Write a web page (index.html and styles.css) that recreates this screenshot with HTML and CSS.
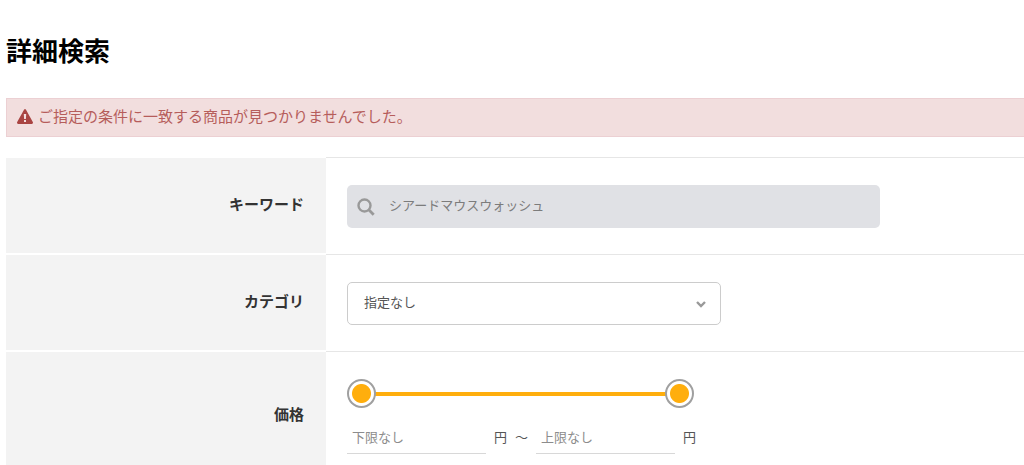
FILE: index.html
```html
<!DOCTYPE html>
<html lang="ja">
<head>
<meta charset="utf-8">
<meta name="viewport" content="width=device-width, initial-scale=1">
<title>詳細検索</title>
<link rel="stylesheet" href="styles.css">
</head>
<body>
<main class="page">
  <h1 class="title">詳細検索</h1>
  <p class="alert" role="alert">
    <svg class="alert-icon" viewBox="0 0 16 15" aria-hidden="true">
      <path fill="currentColor" fill-rule="evenodd" d="M7 .8a1.2 1.2 0 0 1 2 0l6.8 12.3a1.2 1.2 0 0 1-1 1.8H1.2a1.2 1.2 0 0 1-1-1.8zM6.8 5l.3 5h1.800l.3-5zM7 11v2h2v-2z"/>
    </svg>
    <span>ご指定の条件に一致する商品が見つかりませんでした。</span>
  </p>
  <form class="search">
    <div class="row">
      <label class="label" for="keyword">キーワード</label>
      <div class="field">
        <div class="keyword">
          <svg class="keyword-icon" viewBox="0 0 18 18" aria-hidden="true">
            <circle cx="7.5" cy="7.5" r="6" fill="none" stroke="currentColor" stroke-width="2.4"/>
            <path d="M12 12l4.7 4.7" stroke="currentColor" stroke-width="2.8"/>
          </svg>
          <input class="keyword-input" id="keyword" type="text" value="シアードマウスウォッシュ">
        </div>
      </div>
    </div>
    <div class="row">
      <label class="label" for="category">カテゴリ</label>
      <div class="field">
        <div class="select">
          <select class="select-box" id="category"><option>指定なし</option></select>
          <svg class="select-arrow" viewBox="0 0 10 8" aria-hidden="true">
            <path d="M1 2l4 4 4-4" fill="none" stroke="currentColor" stroke-width="2.4"/>
          </svg>
        </div>
      </div>
    </div>
    <div class="row">
      <label class="label" for="price-min">価格</label>
      <div class="field">
        <div class="slider">
          <input class="range" type="range" min="0" max="100" value="0" aria-label="価格の下限">
          <input class="range" type="range" min="0" max="100" value="100" aria-label="価格の上限">
        </div>
        <div class="prices">
          <input class="price" id="price-min" type="text" placeholder="下限なし">
          <span class="unit">円</span>
          <span class="unit">～</span>
          <input class="price" type="text" placeholder="上限なし" aria-label="上限">
          <span class="unit">円</span>
        </div>
      </div>
    </div>
  </form>
</main>
</body>
</html>
```
FILE: styles.css
```css
* {
  box-sizing: border-box;
}

body {
  margin: 0;
  background: #fff;
  color: #333;
  font: 13px/20px "Noto Sans CJK JP", sans-serif;
}

input,
select {
  font: inherit;
}

.page {
  padding: 30px 0 0 6px;
}

.title {
  margin: 0 0 28px;
  color: #000;
  font-size: 26px;
  line-height: 40px;
  font-weight: 700;
}

.alert {
  display: flex;
  align-items: center;
  gap: 6px;
  margin: 0 0 20px;
  padding: 5px 10px 8px;
  border: 1px solid #ecd0d3;
  border-right: 0;
  background: #f2dede;
  color: #b65d5b;
  font-size: 15px;
  line-height: 24px;
}

.alert-icon {
  width: 16px;
  height: 15px;
  color: #a94442;
}

.alert span {
  margin-left: -1px;
}

.row {
  display: grid;
  grid-template-columns: 320px 1fr;
}

.label {
  display: flex;
  align-items: center;
  justify-content: flex-end;
  margin: 1px 0;
  padding: 0 22px 4px 0;
  background: #f3f3f3;
  font-size: 15px;
  font-weight: 700;
}

.field {
  padding: 27px 21px 26px;
  border-top: 1px solid #e6e6e6;
}

.keyword {
  display: flex;
  align-items: center;
  gap: 14px;
  max-width: 533px;
  height: 43px;
  padding: 0 10px;
  border-radius: 5px;
  background: #e0e1e5;
}

.keyword-icon {
  flex: none;
  width: 18px;
  height: 18px;
  color: #999;
}

.keyword-input {
  flex: 1;
  min-width: 0;
  padding: 0 0 4px;
  border: 0;
  background: none;
  color: #7c7c7c;
}

.select {
  display: grid;
  align-items: center;
  max-width: 374px;
}

.select-box,
.select-arrow {
  grid-area: 1 / 1;
}

.select-box {
  width: 100%;
  height: 43px;
  padding: 0 32px 4px 16px;
  border: 1px solid #ccc;
  border-radius: 5px;
  appearance: none;
  background: #fff;
  color: #555;
}

.select-arrow {
  justify-self: end;
  width: 10px;
  height: 8px;
  margin-right: 15px;
  color: #999;
  pointer-events: none;
}

.slider {
  display: grid;
  align-items: center;
  max-width: 347px;
  height: 29px;
  background: linear-gradient(#ffae0d, #ffae0d) center / 320px 4px no-repeat;
}

.range {
  grid-area: 1 / 1;
  width: 100%;
  height: 29px;
  margin: 0;
  appearance: none;
  background: none;
  pointer-events: none;
}

.range::-webkit-slider-thumb {
  width: 29px;
  height: 29px;
  border: 2px solid #a0a0a0;
  border-radius: 50%;
  appearance: none;
  background: radial-gradient(circle, #ffae0d 9px, #fff 10px);
  pointer-events: auto;
}

.prices {
  display: flex;
  align-items: center;
  gap: 8px;
  margin-top: 14px;
}

.price {
  width: 139px;
  height: 32px;
  padding: 0 5px 2px;
  border: 0;
  border-bottom: 1px solid #d8d8d8;
  background: none;
}

.price::placeholder {
  color: #8c8c8c;
}

.unit {
  padding-bottom: 2px;
  color: #555;
}
```
